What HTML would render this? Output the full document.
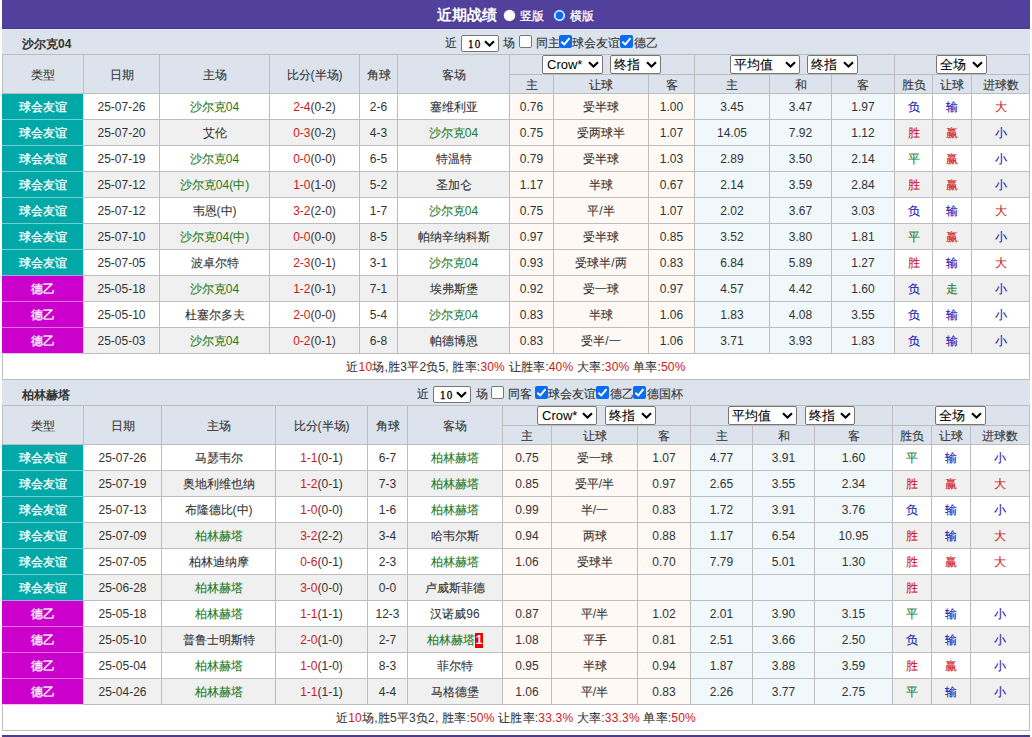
<!DOCTYPE html><html><head><meta charset="utf-8"><style>
html,body{margin:0;padding:0;background:#fff;}
body{width:1032px;height:737px;position:relative;overflow:hidden;font-family:"Liberation Sans",sans-serif;font-size:12px;color:#333;}
body div{position:absolute;box-sizing:content-box;}
.t{text-align:center;white-space:nowrap;overflow:visible;}
.c{-webkit-text-stroke:0.1px currentColor;}
.tw .c{-webkit-text-stroke:0.3px #fff;}
.sel{background:#fff;border:1px solid #767676;border-radius:2px;font-size:13px;color:#000;}
.badge{display:inline-block;background:#e00;color:#fff;font-weight:bold;width:8px;line-height:15px;height:15px;vertical-align:middle;text-align:center;font-size:12px}

</style></head><body>
<div style="left:2px;top:0px;width:1028px;height:28px;background:#52409d;"></div>
<div style="left:2px;top:28px;width:1028px;height:1px;background:#46388a;"></div>
<div style="left:2px;top:29px;width:1028px;height:1px;background:#e6e4f8;"></div>
<div class="t" style="left:437px;top:0px;width:62px;height:29px;line-height:29px;color:#fff;font-weight:bold;font-size:15px;text-align:left">近期战绩</div>
<svg style="position:absolute;left:503px;top:9px" width="13" height="13" viewBox="0 0 13 13"><circle cx="6.5" cy="6.5" r="6.1" fill="#fff" stroke="#3a2d70" stroke-width="0.6"/></svg>
<div class="t tw" style="left:520px;top:2px;width:30px;height:29px;line-height:29px;color:#fff;text-align:left"><span class="c">竖版</span></div>
<svg style="position:absolute;left:553px;top:9px" width="13" height="13" viewBox="0 0 13 13"><circle cx="6.5" cy="6.5" r="6.3" fill="#2a5fe0"/><circle cx="6.5" cy="6.5" r="5.4" fill="#fff"/><circle cx="6.5" cy="6.5" r="3.9" fill="#0a6cff"/></svg>
<div class="t tw" style="left:570px;top:2px;width:30px;height:29px;line-height:29px;color:#fff;text-align:left"><span class="c">横版</span></div>
<div style="left:2px;top:30px;width:1028px;height:24px;background:#dce3ec;"></div>
<div class="t" style="left:22px;top:32px;width:200px;height:24px;line-height:24px;text-align:left;font-weight:bold;">沙尔克04</div>

<div style="left:2px;top:54px;width:1028px;height:40px;background:#dce3ec;"></div>
<div style="left:2px;top:54px;width:1028px;height:1px;background:#bdbdbd;"></div>
<div style="left:2px;top:93px;width:1028px;height:1px;background:#bdbdbd;"></div>
<div style="left:509px;top:74px;width:520px;height:1px;background:#bdbdbd;"></div>
<div class="t" style="left:3px;top:56px;width:80px;height:38px;line-height:38px;"><span class="c">类型</span></div>
<div class="t" style="left:84px;top:56px;width:75px;height:38px;line-height:38px;"><span class="c">日期</span></div>
<div class="t" style="left:160px;top:56px;width:109px;height:38px;line-height:38px;"><span class="c">主场</span></div>
<div class="t" style="left:270px;top:56px;width:89px;height:38px;line-height:38px;"><span class="c">比分</span>(<span class="c">半场</span>)</div>
<div class="t" style="left:360px;top:56px;width:37px;height:38px;line-height:38px;"><span class="c">角球</span></div>
<div class="t" style="left:398px;top:56px;width:111px;height:38px;line-height:38px;"><span class="c">客场</span></div>
<div class="t" style="left:510px;top:76px;width:43px;height:18px;line-height:18px;"><span class="c">主</span></div>
<div class="t" style="left:554px;top:76px;width:94px;height:18px;line-height:18px;"><span class="c">让球</span></div>
<div class="t" style="left:649px;top:76px;width:45px;height:18px;line-height:18px;"><span class="c">客</span></div>
<div class="t" style="left:695px;top:76px;width:74px;height:18px;line-height:18px;"><span class="c">主</span></div>
<div class="t" style="left:770px;top:76px;width:61px;height:18px;line-height:18px;"><span class="c">和</span></div>
<div class="t" style="left:832px;top:76px;width:62px;height:18px;line-height:18px;"><span class="c">客</span></div>
<div class="t" style="left:895px;top:76px;width:37px;height:18px;line-height:18px;"><span class="c">胜负</span></div>
<div class="t" style="left:933px;top:76px;width:38px;height:18px;line-height:18px;"><span class="c">让球</span></div>
<div class="t" style="left:972px;top:76px;width:57px;height:18px;line-height:18px;"><span class="c">进球数</span></div>
<div style="left:84px;top:94px;width:75px;height:25px;background:#fff;"></div>
<div style="left:160px;top:94px;width:109px;height:25px;background:#fff;"></div>
<div style="left:270px;top:94px;width:89px;height:25px;background:#fff;"></div>
<div style="left:360px;top:94px;width:37px;height:25px;background:#fff;"></div>
<div style="left:398px;top:94px;width:111px;height:25px;background:#fff;"></div>
<div style="left:510px;top:94px;width:43px;height:25px;background:#fef9f5;"></div>
<div style="left:554px;top:94px;width:94px;height:25px;background:#fef9f5;"></div>
<div style="left:649px;top:94px;width:45px;height:25px;background:#fef9f5;"></div>
<div style="left:695px;top:94px;width:74px;height:25px;background:#f0f8fb;"></div>
<div style="left:770px;top:94px;width:61px;height:25px;background:#f0f8fb;"></div>
<div style="left:832px;top:94px;width:62px;height:25px;background:#f0f8fb;"></div>
<div style="left:895px;top:94px;width:37px;height:25px;background:#fff;"></div>
<div style="left:933px;top:94px;width:38px;height:25px;background:#fff;"></div>
<div style="left:972px;top:94px;width:57px;height:25px;background:#fff;"></div>
<div class="t" style="left:84px;top:95px;width:75px;height:25px;line-height:25px;">25-07-26</div>
<div class="t" style="left:160px;top:95px;width:109px;height:25px;line-height:25px;"><span style="color:#1f7a1f"><span class="c">沙尔克</span>04</span></div>
<div class="t" style="left:270px;top:95px;width:89px;height:25px;line-height:25px;"><span style="color:#d01818">2-4</span>(0-2)</div>
<div class="t" style="left:360px;top:95px;width:37px;height:25px;line-height:25px;">2-6</div>
<div class="t" style="left:398px;top:95px;width:111px;height:25px;line-height:25px;"><span class="c">塞维利亚</span></div>
<div class="t" style="left:510px;top:95px;width:43px;height:25px;line-height:25px;">0.76</div>
<div class="t" style="left:554px;top:95px;width:94px;height:25px;line-height:25px;"><span class="c">受半球</span></div>
<div class="t" style="left:649px;top:95px;width:45px;height:25px;line-height:25px;">1.00</div>
<div class="t" style="left:695px;top:95px;width:74px;height:25px;line-height:25px;">3.45</div>
<div class="t" style="left:770px;top:95px;width:61px;height:25px;line-height:25px;">3.47</div>
<div class="t" style="left:832px;top:95px;width:62px;height:25px;line-height:25px;">1.97</div>
<div class="t" style="left:895px;top:95px;width:37px;height:25px;line-height:25px;"><span style="color:#1414b4"><span class="c">负</span></span></div>
<div class="t" style="left:933px;top:95px;width:38px;height:25px;line-height:25px;"><span style="color:#1414b4"><span class="c">输</span></span></div>
<div class="t" style="left:972px;top:95px;width:57px;height:25px;line-height:25px;"><span style="color:#d01818"><span class="c">大</span></span></div>
<div style="left:84px;top:120px;width:75px;height:25px;background:#f0f0f0;"></div>
<div style="left:160px;top:120px;width:109px;height:25px;background:#f0f0f0;"></div>
<div style="left:270px;top:120px;width:89px;height:25px;background:#f0f0f0;"></div>
<div style="left:360px;top:120px;width:37px;height:25px;background:#f0f0f0;"></div>
<div style="left:398px;top:120px;width:111px;height:25px;background:#f0f0f0;"></div>
<div style="left:510px;top:120px;width:43px;height:25px;background:#fef9f5;"></div>
<div style="left:554px;top:120px;width:94px;height:25px;background:#fef9f5;"></div>
<div style="left:649px;top:120px;width:45px;height:25px;background:#fef9f5;"></div>
<div style="left:695px;top:120px;width:74px;height:25px;background:#f0f8fb;"></div>
<div style="left:770px;top:120px;width:61px;height:25px;background:#f0f8fb;"></div>
<div style="left:832px;top:120px;width:62px;height:25px;background:#f0f8fb;"></div>
<div style="left:895px;top:120px;width:37px;height:25px;background:#f0f0f0;"></div>
<div style="left:933px;top:120px;width:38px;height:25px;background:#f0f0f0;"></div>
<div style="left:972px;top:120px;width:57px;height:25px;background:#f0f0f0;"></div>
<div class="t" style="left:84px;top:121px;width:75px;height:25px;line-height:25px;">25-07-20</div>
<div class="t" style="left:160px;top:121px;width:109px;height:25px;line-height:25px;"><span class="c">艾伦</span></div>
<div class="t" style="left:270px;top:121px;width:89px;height:25px;line-height:25px;"><span style="color:#d01818">0-3</span>(0-2)</div>
<div class="t" style="left:360px;top:121px;width:37px;height:25px;line-height:25px;">4-3</div>
<div class="t" style="left:398px;top:121px;width:111px;height:25px;line-height:25px;"><span style="color:#1f7a1f"><span class="c">沙尔克</span>04</span></div>
<div class="t" style="left:510px;top:121px;width:43px;height:25px;line-height:25px;">0.75</div>
<div class="t" style="left:554px;top:121px;width:94px;height:25px;line-height:25px;"><span class="c">受两球半</span></div>
<div class="t" style="left:649px;top:121px;width:45px;height:25px;line-height:25px;">1.07</div>
<div class="t" style="left:695px;top:121px;width:74px;height:25px;line-height:25px;">14.05</div>
<div class="t" style="left:770px;top:121px;width:61px;height:25px;line-height:25px;">7.92</div>
<div class="t" style="left:832px;top:121px;width:62px;height:25px;line-height:25px;">1.12</div>
<div class="t" style="left:895px;top:121px;width:37px;height:25px;line-height:25px;"><span style="color:#d01818"><span class="c">胜</span></span></div>
<div class="t" style="left:933px;top:121px;width:38px;height:25px;line-height:25px;"><span style="color:#d01818"><span class="c">赢</span></span></div>
<div class="t" style="left:972px;top:121px;width:57px;height:25px;line-height:25px;"><span style="color:#1414b4"><span class="c">小</span></span></div>
<div style="left:84px;top:146px;width:75px;height:25px;background:#fff;"></div>
<div style="left:160px;top:146px;width:109px;height:25px;background:#fff;"></div>
<div style="left:270px;top:146px;width:89px;height:25px;background:#fff;"></div>
<div style="left:360px;top:146px;width:37px;height:25px;background:#fff;"></div>
<div style="left:398px;top:146px;width:111px;height:25px;background:#fff;"></div>
<div style="left:510px;top:146px;width:43px;height:25px;background:#fef9f5;"></div>
<div style="left:554px;top:146px;width:94px;height:25px;background:#fef9f5;"></div>
<div style="left:649px;top:146px;width:45px;height:25px;background:#fef9f5;"></div>
<div style="left:695px;top:146px;width:74px;height:25px;background:#f0f8fb;"></div>
<div style="left:770px;top:146px;width:61px;height:25px;background:#f0f8fb;"></div>
<div style="left:832px;top:146px;width:62px;height:25px;background:#f0f8fb;"></div>
<div style="left:895px;top:146px;width:37px;height:25px;background:#fff;"></div>
<div style="left:933px;top:146px;width:38px;height:25px;background:#fff;"></div>
<div style="left:972px;top:146px;width:57px;height:25px;background:#fff;"></div>
<div class="t" style="left:84px;top:147px;width:75px;height:25px;line-height:25px;">25-07-19</div>
<div class="t" style="left:160px;top:147px;width:109px;height:25px;line-height:25px;"><span style="color:#1f7a1f"><span class="c">沙尔克</span>04</span></div>
<div class="t" style="left:270px;top:147px;width:89px;height:25px;line-height:25px;"><span style="color:#d01818">0-0</span>(0-0)</div>
<div class="t" style="left:360px;top:147px;width:37px;height:25px;line-height:25px;">6-5</div>
<div class="t" style="left:398px;top:147px;width:111px;height:25px;line-height:25px;"><span class="c">特温特</span></div>
<div class="t" style="left:510px;top:147px;width:43px;height:25px;line-height:25px;">0.79</div>
<div class="t" style="left:554px;top:147px;width:94px;height:25px;line-height:25px;"><span class="c">受半球</span></div>
<div class="t" style="left:649px;top:147px;width:45px;height:25px;line-height:25px;">1.03</div>
<div class="t" style="left:695px;top:147px;width:74px;height:25px;line-height:25px;">2.89</div>
<div class="t" style="left:770px;top:147px;width:61px;height:25px;line-height:25px;">3.50</div>
<div class="t" style="left:832px;top:147px;width:62px;height:25px;line-height:25px;">2.14</div>
<div class="t" style="left:895px;top:147px;width:37px;height:25px;line-height:25px;"><span style="color:#1f7a1f"><span class="c">平</span></span></div>
<div class="t" style="left:933px;top:147px;width:38px;height:25px;line-height:25px;"><span style="color:#d01818"><span class="c">赢</span></span></div>
<div class="t" style="left:972px;top:147px;width:57px;height:25px;line-height:25px;"><span style="color:#1414b4"><span class="c">小</span></span></div>
<div style="left:84px;top:172px;width:75px;height:25px;background:#f0f0f0;"></div>
<div style="left:160px;top:172px;width:109px;height:25px;background:#f0f0f0;"></div>
<div style="left:270px;top:172px;width:89px;height:25px;background:#f0f0f0;"></div>
<div style="left:360px;top:172px;width:37px;height:25px;background:#f0f0f0;"></div>
<div style="left:398px;top:172px;width:111px;height:25px;background:#f0f0f0;"></div>
<div style="left:510px;top:172px;width:43px;height:25px;background:#fef9f5;"></div>
<div style="left:554px;top:172px;width:94px;height:25px;background:#fef9f5;"></div>
<div style="left:649px;top:172px;width:45px;height:25px;background:#fef9f5;"></div>
<div style="left:695px;top:172px;width:74px;height:25px;background:#f0f8fb;"></div>
<div style="left:770px;top:172px;width:61px;height:25px;background:#f0f8fb;"></div>
<div style="left:832px;top:172px;width:62px;height:25px;background:#f0f8fb;"></div>
<div style="left:895px;top:172px;width:37px;height:25px;background:#f0f0f0;"></div>
<div style="left:933px;top:172px;width:38px;height:25px;background:#f0f0f0;"></div>
<div style="left:972px;top:172px;width:57px;height:25px;background:#f0f0f0;"></div>
<div class="t" style="left:84px;top:173px;width:75px;height:25px;line-height:25px;">25-07-12</div>
<div class="t" style="left:160px;top:173px;width:109px;height:25px;line-height:25px;"><span style="color:#1f7a1f"><span class="c">沙尔克</span>04(<span class="c">中</span>)</span></div>
<div class="t" style="left:270px;top:173px;width:89px;height:25px;line-height:25px;"><span style="color:#d01818">1-0</span>(1-0)</div>
<div class="t" style="left:360px;top:173px;width:37px;height:25px;line-height:25px;">5-2</div>
<div class="t" style="left:398px;top:173px;width:111px;height:25px;line-height:25px;"><span class="c">圣加仑</span></div>
<div class="t" style="left:510px;top:173px;width:43px;height:25px;line-height:25px;">1.17</div>
<div class="t" style="left:554px;top:173px;width:94px;height:25px;line-height:25px;"><span class="c">半球</span></div>
<div class="t" style="left:649px;top:173px;width:45px;height:25px;line-height:25px;">0.67</div>
<div class="t" style="left:695px;top:173px;width:74px;height:25px;line-height:25px;">2.14</div>
<div class="t" style="left:770px;top:173px;width:61px;height:25px;line-height:25px;">3.59</div>
<div class="t" style="left:832px;top:173px;width:62px;height:25px;line-height:25px;">2.84</div>
<div class="t" style="left:895px;top:173px;width:37px;height:25px;line-height:25px;"><span style="color:#d01818"><span class="c">胜</span></span></div>
<div class="t" style="left:933px;top:173px;width:38px;height:25px;line-height:25px;"><span style="color:#d01818"><span class="c">赢</span></span></div>
<div class="t" style="left:972px;top:173px;width:57px;height:25px;line-height:25px;"><span style="color:#1414b4"><span class="c">小</span></span></div>
<div style="left:84px;top:198px;width:75px;height:25px;background:#fff;"></div>
<div style="left:160px;top:198px;width:109px;height:25px;background:#fff;"></div>
<div style="left:270px;top:198px;width:89px;height:25px;background:#fff;"></div>
<div style="left:360px;top:198px;width:37px;height:25px;background:#fff;"></div>
<div style="left:398px;top:198px;width:111px;height:25px;background:#fff;"></div>
<div style="left:510px;top:198px;width:43px;height:25px;background:#fef9f5;"></div>
<div style="left:554px;top:198px;width:94px;height:25px;background:#fef9f5;"></div>
<div style="left:649px;top:198px;width:45px;height:25px;background:#fef9f5;"></div>
<div style="left:695px;top:198px;width:74px;height:25px;background:#f0f8fb;"></div>
<div style="left:770px;top:198px;width:61px;height:25px;background:#f0f8fb;"></div>
<div style="left:832px;top:198px;width:62px;height:25px;background:#f0f8fb;"></div>
<div style="left:895px;top:198px;width:37px;height:25px;background:#fff;"></div>
<div style="left:933px;top:198px;width:38px;height:25px;background:#fff;"></div>
<div style="left:972px;top:198px;width:57px;height:25px;background:#fff;"></div>
<div class="t" style="left:84px;top:199px;width:75px;height:25px;line-height:25px;">25-07-12</div>
<div class="t" style="left:160px;top:199px;width:109px;height:25px;line-height:25px;"><span class="c">韦恩</span>(<span class="c">中</span>)</div>
<div class="t" style="left:270px;top:199px;width:89px;height:25px;line-height:25px;"><span style="color:#d01818">3-2</span>(2-0)</div>
<div class="t" style="left:360px;top:199px;width:37px;height:25px;line-height:25px;">1-7</div>
<div class="t" style="left:398px;top:199px;width:111px;height:25px;line-height:25px;"><span style="color:#1f7a1f"><span class="c">沙尔克</span>04</span></div>
<div class="t" style="left:510px;top:199px;width:43px;height:25px;line-height:25px;">0.75</div>
<div class="t" style="left:554px;top:199px;width:94px;height:25px;line-height:25px;"><span class="c">平</span>/<span class="c">半</span></div>
<div class="t" style="left:649px;top:199px;width:45px;height:25px;line-height:25px;">1.07</div>
<div class="t" style="left:695px;top:199px;width:74px;height:25px;line-height:25px;">2.02</div>
<div class="t" style="left:770px;top:199px;width:61px;height:25px;line-height:25px;">3.67</div>
<div class="t" style="left:832px;top:199px;width:62px;height:25px;line-height:25px;">3.03</div>
<div class="t" style="left:895px;top:199px;width:37px;height:25px;line-height:25px;"><span style="color:#1414b4"><span class="c">负</span></span></div>
<div class="t" style="left:933px;top:199px;width:38px;height:25px;line-height:25px;"><span style="color:#1414b4"><span class="c">输</span></span></div>
<div class="t" style="left:972px;top:199px;width:57px;height:25px;line-height:25px;"><span style="color:#d01818"><span class="c">大</span></span></div>
<div style="left:84px;top:224px;width:75px;height:25px;background:#f0f0f0;"></div>
<div style="left:160px;top:224px;width:109px;height:25px;background:#f0f0f0;"></div>
<div style="left:270px;top:224px;width:89px;height:25px;background:#f0f0f0;"></div>
<div style="left:360px;top:224px;width:37px;height:25px;background:#f0f0f0;"></div>
<div style="left:398px;top:224px;width:111px;height:25px;background:#f0f0f0;"></div>
<div style="left:510px;top:224px;width:43px;height:25px;background:#fef9f5;"></div>
<div style="left:554px;top:224px;width:94px;height:25px;background:#fef9f5;"></div>
<div style="left:649px;top:224px;width:45px;height:25px;background:#fef9f5;"></div>
<div style="left:695px;top:224px;width:74px;height:25px;background:#f0f8fb;"></div>
<div style="left:770px;top:224px;width:61px;height:25px;background:#f0f8fb;"></div>
<div style="left:832px;top:224px;width:62px;height:25px;background:#f0f8fb;"></div>
<div style="left:895px;top:224px;width:37px;height:25px;background:#f0f0f0;"></div>
<div style="left:933px;top:224px;width:38px;height:25px;background:#f0f0f0;"></div>
<div style="left:972px;top:224px;width:57px;height:25px;background:#f0f0f0;"></div>
<div class="t" style="left:84px;top:225px;width:75px;height:25px;line-height:25px;">25-07-10</div>
<div class="t" style="left:160px;top:225px;width:109px;height:25px;line-height:25px;"><span style="color:#1f7a1f"><span class="c">沙尔克</span>04(<span class="c">中</span>)</span></div>
<div class="t" style="left:270px;top:225px;width:89px;height:25px;line-height:25px;"><span style="color:#d01818">0-0</span>(0-0)</div>
<div class="t" style="left:360px;top:225px;width:37px;height:25px;line-height:25px;">8-5</div>
<div class="t" style="left:398px;top:225px;width:111px;height:25px;line-height:25px;"><span class="c">帕纳辛纳科斯</span></div>
<div class="t" style="left:510px;top:225px;width:43px;height:25px;line-height:25px;">0.97</div>
<div class="t" style="left:554px;top:225px;width:94px;height:25px;line-height:25px;"><span class="c">受半球</span></div>
<div class="t" style="left:649px;top:225px;width:45px;height:25px;line-height:25px;">0.85</div>
<div class="t" style="left:695px;top:225px;width:74px;height:25px;line-height:25px;">3.52</div>
<div class="t" style="left:770px;top:225px;width:61px;height:25px;line-height:25px;">3.80</div>
<div class="t" style="left:832px;top:225px;width:62px;height:25px;line-height:25px;">1.81</div>
<div class="t" style="left:895px;top:225px;width:37px;height:25px;line-height:25px;"><span style="color:#1f7a1f"><span class="c">平</span></span></div>
<div class="t" style="left:933px;top:225px;width:38px;height:25px;line-height:25px;"><span style="color:#d01818"><span class="c">赢</span></span></div>
<div class="t" style="left:972px;top:225px;width:57px;height:25px;line-height:25px;"><span style="color:#1414b4"><span class="c">小</span></span></div>
<div style="left:84px;top:250px;width:75px;height:25px;background:#fff;"></div>
<div style="left:160px;top:250px;width:109px;height:25px;background:#fff;"></div>
<div style="left:270px;top:250px;width:89px;height:25px;background:#fff;"></div>
<div style="left:360px;top:250px;width:37px;height:25px;background:#fff;"></div>
<div style="left:398px;top:250px;width:111px;height:25px;background:#fff;"></div>
<div style="left:510px;top:250px;width:43px;height:25px;background:#fef9f5;"></div>
<div style="left:554px;top:250px;width:94px;height:25px;background:#fef9f5;"></div>
<div style="left:649px;top:250px;width:45px;height:25px;background:#fef9f5;"></div>
<div style="left:695px;top:250px;width:74px;height:25px;background:#f0f8fb;"></div>
<div style="left:770px;top:250px;width:61px;height:25px;background:#f0f8fb;"></div>
<div style="left:832px;top:250px;width:62px;height:25px;background:#f0f8fb;"></div>
<div style="left:895px;top:250px;width:37px;height:25px;background:#fff;"></div>
<div style="left:933px;top:250px;width:38px;height:25px;background:#fff;"></div>
<div style="left:972px;top:250px;width:57px;height:25px;background:#fff;"></div>
<div class="t" style="left:84px;top:251px;width:75px;height:25px;line-height:25px;">25-07-05</div>
<div class="t" style="left:160px;top:251px;width:109px;height:25px;line-height:25px;"><span class="c">波卓尔特</span></div>
<div class="t" style="left:270px;top:251px;width:89px;height:25px;line-height:25px;"><span style="color:#d01818">2-3</span>(0-1)</div>
<div class="t" style="left:360px;top:251px;width:37px;height:25px;line-height:25px;">3-1</div>
<div class="t" style="left:398px;top:251px;width:111px;height:25px;line-height:25px;"><span style="color:#1f7a1f"><span class="c">沙尔克</span>04</span></div>
<div class="t" style="left:510px;top:251px;width:43px;height:25px;line-height:25px;">0.93</div>
<div class="t" style="left:554px;top:251px;width:94px;height:25px;line-height:25px;"><span class="c">受球半</span>/<span class="c">两</span></div>
<div class="t" style="left:649px;top:251px;width:45px;height:25px;line-height:25px;">0.83</div>
<div class="t" style="left:695px;top:251px;width:74px;height:25px;line-height:25px;">6.84</div>
<div class="t" style="left:770px;top:251px;width:61px;height:25px;line-height:25px;">5.89</div>
<div class="t" style="left:832px;top:251px;width:62px;height:25px;line-height:25px;">1.27</div>
<div class="t" style="left:895px;top:251px;width:37px;height:25px;line-height:25px;"><span style="color:#d01818"><span class="c">胜</span></span></div>
<div class="t" style="left:933px;top:251px;width:38px;height:25px;line-height:25px;"><span style="color:#1414b4"><span class="c">输</span></span></div>
<div class="t" style="left:972px;top:251px;width:57px;height:25px;line-height:25px;"><span style="color:#d01818"><span class="c">大</span></span></div>
<div style="left:84px;top:276px;width:75px;height:25px;background:#f0f0f0;"></div>
<div style="left:160px;top:276px;width:109px;height:25px;background:#f0f0f0;"></div>
<div style="left:270px;top:276px;width:89px;height:25px;background:#f0f0f0;"></div>
<div style="left:360px;top:276px;width:37px;height:25px;background:#f0f0f0;"></div>
<div style="left:398px;top:276px;width:111px;height:25px;background:#f0f0f0;"></div>
<div style="left:510px;top:276px;width:43px;height:25px;background:#fef9f5;"></div>
<div style="left:554px;top:276px;width:94px;height:25px;background:#fef9f5;"></div>
<div style="left:649px;top:276px;width:45px;height:25px;background:#fef9f5;"></div>
<div style="left:695px;top:276px;width:74px;height:25px;background:#f0f8fb;"></div>
<div style="left:770px;top:276px;width:61px;height:25px;background:#f0f8fb;"></div>
<div style="left:832px;top:276px;width:62px;height:25px;background:#f0f8fb;"></div>
<div style="left:895px;top:276px;width:37px;height:25px;background:#f0f0f0;"></div>
<div style="left:933px;top:276px;width:38px;height:25px;background:#f0f0f0;"></div>
<div style="left:972px;top:276px;width:57px;height:25px;background:#f0f0f0;"></div>
<div class="t" style="left:84px;top:277px;width:75px;height:25px;line-height:25px;">25-05-18</div>
<div class="t" style="left:160px;top:277px;width:109px;height:25px;line-height:25px;"><span style="color:#1f7a1f"><span class="c">沙尔克</span>04</span></div>
<div class="t" style="left:270px;top:277px;width:89px;height:25px;line-height:25px;"><span style="color:#d01818">1-2</span>(0-1)</div>
<div class="t" style="left:360px;top:277px;width:37px;height:25px;line-height:25px;">7-1</div>
<div class="t" style="left:398px;top:277px;width:111px;height:25px;line-height:25px;"><span class="c">埃弗斯堡</span></div>
<div class="t" style="left:510px;top:277px;width:43px;height:25px;line-height:25px;">0.92</div>
<div class="t" style="left:554px;top:277px;width:94px;height:25px;line-height:25px;"><span class="c">受一球</span></div>
<div class="t" style="left:649px;top:277px;width:45px;height:25px;line-height:25px;">0.97</div>
<div class="t" style="left:695px;top:277px;width:74px;height:25px;line-height:25px;">4.57</div>
<div class="t" style="left:770px;top:277px;width:61px;height:25px;line-height:25px;">4.42</div>
<div class="t" style="left:832px;top:277px;width:62px;height:25px;line-height:25px;">1.60</div>
<div class="t" style="left:895px;top:277px;width:37px;height:25px;line-height:25px;"><span style="color:#1414b4"><span class="c">负</span></span></div>
<div class="t" style="left:933px;top:277px;width:38px;height:25px;line-height:25px;"><span style="color:#1f7a1f"><span class="c">走</span></span></div>
<div class="t" style="left:972px;top:277px;width:57px;height:25px;line-height:25px;"><span style="color:#1414b4"><span class="c">小</span></span></div>
<div style="left:84px;top:302px;width:75px;height:25px;background:#fff;"></div>
<div style="left:160px;top:302px;width:109px;height:25px;background:#fff;"></div>
<div style="left:270px;top:302px;width:89px;height:25px;background:#fff;"></div>
<div style="left:360px;top:302px;width:37px;height:25px;background:#fff;"></div>
<div style="left:398px;top:302px;width:111px;height:25px;background:#fff;"></div>
<div style="left:510px;top:302px;width:43px;height:25px;background:#fef9f5;"></div>
<div style="left:554px;top:302px;width:94px;height:25px;background:#fef9f5;"></div>
<div style="left:649px;top:302px;width:45px;height:25px;background:#fef9f5;"></div>
<div style="left:695px;top:302px;width:74px;height:25px;background:#f0f8fb;"></div>
<div style="left:770px;top:302px;width:61px;height:25px;background:#f0f8fb;"></div>
<div style="left:832px;top:302px;width:62px;height:25px;background:#f0f8fb;"></div>
<div style="left:895px;top:302px;width:37px;height:25px;background:#fff;"></div>
<div style="left:933px;top:302px;width:38px;height:25px;background:#fff;"></div>
<div style="left:972px;top:302px;width:57px;height:25px;background:#fff;"></div>
<div class="t" style="left:84px;top:303px;width:75px;height:25px;line-height:25px;">25-05-10</div>
<div class="t" style="left:160px;top:303px;width:109px;height:25px;line-height:25px;"><span class="c">杜塞尔多夫</span></div>
<div class="t" style="left:270px;top:303px;width:89px;height:25px;line-height:25px;"><span style="color:#d01818">2-0</span>(0-0)</div>
<div class="t" style="left:360px;top:303px;width:37px;height:25px;line-height:25px;">5-4</div>
<div class="t" style="left:398px;top:303px;width:111px;height:25px;line-height:25px;"><span style="color:#1f7a1f"><span class="c">沙尔克</span>04</span></div>
<div class="t" style="left:510px;top:303px;width:43px;height:25px;line-height:25px;">0.83</div>
<div class="t" style="left:554px;top:303px;width:94px;height:25px;line-height:25px;"><span class="c">半球</span></div>
<div class="t" style="left:649px;top:303px;width:45px;height:25px;line-height:25px;">1.06</div>
<div class="t" style="left:695px;top:303px;width:74px;height:25px;line-height:25px;">1.83</div>
<div class="t" style="left:770px;top:303px;width:61px;height:25px;line-height:25px;">4.08</div>
<div class="t" style="left:832px;top:303px;width:62px;height:25px;line-height:25px;">3.55</div>
<div class="t" style="left:895px;top:303px;width:37px;height:25px;line-height:25px;"><span style="color:#1414b4"><span class="c">负</span></span></div>
<div class="t" style="left:933px;top:303px;width:38px;height:25px;line-height:25px;"><span style="color:#1414b4"><span class="c">输</span></span></div>
<div class="t" style="left:972px;top:303px;width:57px;height:25px;line-height:25px;"><span style="color:#1414b4"><span class="c">小</span></span></div>
<div style="left:84px;top:328px;width:75px;height:25px;background:#f0f0f0;"></div>
<div style="left:160px;top:328px;width:109px;height:25px;background:#f0f0f0;"></div>
<div style="left:270px;top:328px;width:89px;height:25px;background:#f0f0f0;"></div>
<div style="left:360px;top:328px;width:37px;height:25px;background:#f0f0f0;"></div>
<div style="left:398px;top:328px;width:111px;height:25px;background:#f0f0f0;"></div>
<div style="left:510px;top:328px;width:43px;height:25px;background:#fef9f5;"></div>
<div style="left:554px;top:328px;width:94px;height:25px;background:#fef9f5;"></div>
<div style="left:649px;top:328px;width:45px;height:25px;background:#fef9f5;"></div>
<div style="left:695px;top:328px;width:74px;height:25px;background:#f0f8fb;"></div>
<div style="left:770px;top:328px;width:61px;height:25px;background:#f0f8fb;"></div>
<div style="left:832px;top:328px;width:62px;height:25px;background:#f0f8fb;"></div>
<div style="left:895px;top:328px;width:37px;height:25px;background:#f0f0f0;"></div>
<div style="left:933px;top:328px;width:38px;height:25px;background:#f0f0f0;"></div>
<div style="left:972px;top:328px;width:57px;height:25px;background:#f0f0f0;"></div>
<div class="t" style="left:84px;top:329px;width:75px;height:25px;line-height:25px;">25-05-03</div>
<div class="t" style="left:160px;top:329px;width:109px;height:25px;line-height:25px;"><span style="color:#1f7a1f"><span class="c">沙尔克</span>04</span></div>
<div class="t" style="left:270px;top:329px;width:89px;height:25px;line-height:25px;"><span style="color:#d01818">0-2</span>(0-1)</div>
<div class="t" style="left:360px;top:329px;width:37px;height:25px;line-height:25px;">6-8</div>
<div class="t" style="left:398px;top:329px;width:111px;height:25px;line-height:25px;"><span class="c">帕德博恩</span></div>
<div class="t" style="left:510px;top:329px;width:43px;height:25px;line-height:25px;">0.83</div>
<div class="t" style="left:554px;top:329px;width:94px;height:25px;line-height:25px;"><span class="c">受半</span>/<span class="c">一</span></div>
<div class="t" style="left:649px;top:329px;width:45px;height:25px;line-height:25px;">1.06</div>
<div class="t" style="left:695px;top:329px;width:74px;height:25px;line-height:25px;">3.71</div>
<div class="t" style="left:770px;top:329px;width:61px;height:25px;line-height:25px;">3.93</div>
<div class="t" style="left:832px;top:329px;width:62px;height:25px;line-height:25px;">1.83</div>
<div class="t" style="left:895px;top:329px;width:37px;height:25px;line-height:25px;"><span style="color:#1414b4"><span class="c">负</span></span></div>
<div class="t" style="left:933px;top:329px;width:38px;height:25px;line-height:25px;"><span style="color:#1414b4"><span class="c">输</span></span></div>
<div class="t" style="left:972px;top:329px;width:57px;height:25px;line-height:25px;"><span style="color:#1414b4"><span class="c">小</span></span></div>
<div style="left:2px;top:54px;width:1px;height:300px;background:#bdbdbd;"></div>
<div style="left:83px;top:54px;width:1px;height:300px;background:#bdbdbd;"></div>
<div style="left:159px;top:54px;width:1px;height:300px;background:#bdbdbd;"></div>
<div style="left:269px;top:54px;width:1px;height:300px;background:#bdbdbd;"></div>
<div style="left:359px;top:54px;width:1px;height:300px;background:#bdbdbd;"></div>
<div style="left:397px;top:54px;width:1px;height:300px;background:#bdbdbd;"></div>
<div style="left:509px;top:54px;width:1px;height:300px;background:#bdbdbd;"></div>
<div style="left:553px;top:74px;width:1px;height:280px;background:#bdbdbd;"></div>
<div style="left:648px;top:74px;width:1px;height:280px;background:#bdbdbd;"></div>
<div style="left:694px;top:54px;width:1px;height:300px;background:#bdbdbd;"></div>
<div style="left:769px;top:74px;width:1px;height:280px;background:#bdbdbd;"></div>
<div style="left:831px;top:74px;width:1px;height:280px;background:#bdbdbd;"></div>
<div style="left:894px;top:54px;width:1px;height:300px;background:#bdbdbd;"></div>
<div style="left:932px;top:74px;width:1px;height:280px;background:#bdbdbd;"></div>
<div style="left:971px;top:74px;width:1px;height:280px;background:#bdbdbd;"></div>
<div style="left:1029px;top:54px;width:1px;height:300px;background:#bdbdbd;"></div>
<div style="left:83px;top:119px;width:947px;height:1px;background:#bdbdbd;"></div>
<div style="left:83px;top:145px;width:947px;height:1px;background:#bdbdbd;"></div>
<div style="left:83px;top:171px;width:947px;height:1px;background:#bdbdbd;"></div>
<div style="left:83px;top:197px;width:947px;height:1px;background:#bdbdbd;"></div>
<div style="left:83px;top:223px;width:947px;height:1px;background:#bdbdbd;"></div>
<div style="left:83px;top:249px;width:947px;height:1px;background:#bdbdbd;"></div>
<div style="left:83px;top:275px;width:947px;height:1px;background:#bdbdbd;"></div>
<div style="left:83px;top:301px;width:947px;height:1px;background:#bdbdbd;"></div>
<div style="left:83px;top:327px;width:947px;height:1px;background:#bdbdbd;"></div>
<div style="left:83px;top:353px;width:947px;height:1px;background:#bdbdbd;"></div>
<div style="left:2px;top:94px;width:81px;height:25px;background:#01a8a8;"></div>
<div style="left:83px;top:94px;width:1px;height:25px;background:#c5ebeb;"></div>
<div class="t tw" style="left:2px;top:95px;width:81px;height:25px;line-height:25px;color:#fff"><span class="c">球会友谊</span></div>
<div style="left:2px;top:120px;width:81px;height:25px;background:#01a8a8;"></div>
<div style="left:2px;top:119px;width:81px;height:1px;background:#73cfcf;"></div>
<div style="left:83px;top:120px;width:1px;height:25px;background:#c5ebeb;"></div>
<div class="t tw" style="left:2px;top:121px;width:81px;height:25px;line-height:25px;color:#fff"><span class="c">球会友谊</span></div>
<div style="left:2px;top:146px;width:81px;height:25px;background:#01a8a8;"></div>
<div style="left:2px;top:145px;width:81px;height:1px;background:#73cfcf;"></div>
<div style="left:83px;top:146px;width:1px;height:25px;background:#c5ebeb;"></div>
<div class="t tw" style="left:2px;top:147px;width:81px;height:25px;line-height:25px;color:#fff"><span class="c">球会友谊</span></div>
<div style="left:2px;top:172px;width:81px;height:25px;background:#01a8a8;"></div>
<div style="left:2px;top:171px;width:81px;height:1px;background:#73cfcf;"></div>
<div style="left:83px;top:172px;width:1px;height:25px;background:#c5ebeb;"></div>
<div class="t tw" style="left:2px;top:173px;width:81px;height:25px;line-height:25px;color:#fff"><span class="c">球会友谊</span></div>
<div style="left:2px;top:198px;width:81px;height:25px;background:#01a8a8;"></div>
<div style="left:2px;top:197px;width:81px;height:1px;background:#73cfcf;"></div>
<div style="left:83px;top:198px;width:1px;height:25px;background:#c5ebeb;"></div>
<div class="t tw" style="left:2px;top:199px;width:81px;height:25px;line-height:25px;color:#fff"><span class="c">球会友谊</span></div>
<div style="left:2px;top:224px;width:81px;height:25px;background:#01a8a8;"></div>
<div style="left:2px;top:223px;width:81px;height:1px;background:#73cfcf;"></div>
<div style="left:83px;top:224px;width:1px;height:25px;background:#c5ebeb;"></div>
<div class="t tw" style="left:2px;top:225px;width:81px;height:25px;line-height:25px;color:#fff"><span class="c">球会友谊</span></div>
<div style="left:2px;top:250px;width:81px;height:25px;background:#01a8a8;"></div>
<div style="left:2px;top:249px;width:81px;height:1px;background:#73cfcf;"></div>
<div style="left:83px;top:250px;width:1px;height:25px;background:#c5ebeb;"></div>
<div class="t tw" style="left:2px;top:251px;width:81px;height:25px;line-height:25px;color:#fff"><span class="c">球会友谊</span></div>
<div style="left:2px;top:276px;width:81px;height:25px;background:#cc00cc;"></div>
<div style="left:2px;top:275px;width:81px;height:1px;background:#aba0d9;"></div>
<div style="left:83px;top:276px;width:1px;height:25px;background:#f3c5f3;"></div>
<div class="t tw" style="left:2px;top:277px;width:81px;height:25px;line-height:25px;color:#fff"><span class="c">德乙</span></div>
<div style="left:2px;top:302px;width:81px;height:25px;background:#cc00cc;"></div>
<div style="left:2px;top:301px;width:81px;height:1px;background:#e272e2;"></div>
<div style="left:83px;top:302px;width:1px;height:25px;background:#f3c5f3;"></div>
<div class="t tw" style="left:2px;top:303px;width:81px;height:25px;line-height:25px;color:#fff"><span class="c">德乙</span></div>
<div style="left:2px;top:328px;width:81px;height:25px;background:#cc00cc;"></div>
<div style="left:2px;top:327px;width:81px;height:1px;background:#e272e2;"></div>
<div style="left:83px;top:328px;width:1px;height:25px;background:#f3c5f3;"></div>
<div class="t tw" style="left:2px;top:329px;width:81px;height:25px;line-height:25px;color:#fff"><span class="c">德乙</span></div>
<div style="left:2px;top:353px;width:81px;height:1px;background:#f2bff2;"></div>
<div style="left:2px;top:354px;width:1028px;height:25px;background:#fff;"></div>
<div style="left:2px;top:354px;width:1px;height:26px;background:#bdbdbd;"></div>
<div style="left:1029px;top:354px;width:1px;height:26px;background:#bdbdbd;"></div>
<div style="left:2px;top:379px;width:1028px;height:1px;background:#bdbdbd;"></div>
<div class="t" style="left:2px;top:355px;width:1028px;height:25px;line-height:25px;letter-spacing:0.2px"><span class="c">近</span><span style="color:#d01818">10</span><span class="c">场</span>,<span class="c">胜</span>3<span class="c">平</span>2<span class="c">负</span>5, <span class="c">胜率</span>:<span style="color:#d01818">30%</span> <span class="c">让胜率</span>:<span style="color:#d01818">40%</span> <span class="c">大率</span>:<span style="color:#d01818">30%</span> <span class="c">单率</span>:<span style="color:#d01818">50%</span></div>
<div class="t" style="left:445px;top:35px;width:14px;height:17px;line-height:17px;text-align:left"><span class="c">近</span></div>
<div class="sel" style="left:461px;top:35px;width:36px;height:15px;"><span style="position:absolute;left:6px;top:0;line-height:15px"><span style="font-family:Liberation Serif,serif;font-size:13.5px;letter-spacing:1.5px;-webkit-text-stroke:0.3px #000;display:inline-block;transform:scaleX(0.82);transform-origin:0 50%">10</span></span></div>
<svg style="position:absolute;left:484px;top:40px" width="11" height="7" viewBox="0 0 11 7"><path d="M1 1.2 L5.5 5.5 L10 1.2" fill="none" stroke="#000" stroke-width="2.1"/></svg>
<div class="t" style="left:503px;top:35px;width:14px;height:17px;line-height:17px;text-align:left"><span class="c">场</span></div>
<div style="left:519px;top:35px;width:11px;height:11px;background:#fff;border:1px solid #767676;border-radius:2px"></div>
<div class="t" style="left:536px;top:35px;width:30px;height:17px;line-height:17px;text-align:left"><span class="c">同主</span></div>
<div style="left:559px;top:35px;width:13px;height:13px;background:#0a6cf5;border-radius:2px"><svg style="position:absolute;left:0;top:0" width="13" height="13" viewBox="0 0 13 13"><path d="M2.3 6.8 L5.3 9.4 L10.5 3.2" fill="none" stroke="#fff" stroke-width="2"/></svg></div>
<div class="t" style="left:572px;top:35px;width:50px;height:17px;line-height:17px;text-align:left"><span class="c">球会友谊</span></div>
<div style="left:620px;top:35px;width:13px;height:13px;background:#0a6cf5;border-radius:2px"><svg style="position:absolute;left:0;top:0" width="13" height="13" viewBox="0 0 13 13"><path d="M2.3 6.8 L5.3 9.4 L10.5 3.2" fill="none" stroke="#fff" stroke-width="2"/></svg></div>
<div class="t" style="left:634px;top:35px;width:30px;height:17px;line-height:17px;text-align:left"><span class="c">德乙</span></div>
<div class="sel" style="left:542px;top:55px;width:59px;height:17px;"><span style="position:absolute;left:4px;top:0;line-height:17px">Crow*</span></div>
<svg style="position:absolute;left:588px;top:61px" width="11" height="7" viewBox="0 0 11 7"><path d="M1 1.2 L5.5 5.5 L10 1.2" fill="none" stroke="#000" stroke-width="2.1"/></svg>
<div class="sel" style="left:610px;top:55px;width:49px;height:17px;"><span style="position:absolute;left:3px;top:0;line-height:17px"><span class="c">终指</span></span></div>
<svg style="position:absolute;left:646px;top:61px" width="11" height="7" viewBox="0 0 11 7"><path d="M1 1.2 L5.5 5.5 L10 1.2" fill="none" stroke="#000" stroke-width="2.1"/></svg>
<div class="sel" style="left:730px;top:55px;width:68px;height:17px;"><span style="position:absolute;left:3px;top:0;line-height:17px"><span class="c">平均值</span></span></div>
<svg style="position:absolute;left:785px;top:61px" width="11" height="7" viewBox="0 0 11 7"><path d="M1 1.2 L5.5 5.5 L10 1.2" fill="none" stroke="#000" stroke-width="2.1"/></svg>
<div class="sel" style="left:807px;top:55px;width:49px;height:17px;"><span style="position:absolute;left:3px;top:0;line-height:17px"><span class="c">终指</span></span></div>
<svg style="position:absolute;left:843px;top:61px" width="11" height="7" viewBox="0 0 11 7"><path d="M1 1.2 L5.5 5.5 L10 1.2" fill="none" stroke="#000" stroke-width="2.1"/></svg>
<div class="sel" style="left:936px;top:55px;width:49px;height:17px;"><span style="position:absolute;left:3px;top:0;line-height:17px"><span class="c">全场</span></span></div>
<svg style="position:absolute;left:972px;top:61px" width="11" height="7" viewBox="0 0 11 7"><path d="M1 1.2 L5.5 5.5 L10 1.2" fill="none" stroke="#000" stroke-width="2.1"/></svg>
<div style="left:2px;top:380px;width:1028px;height:25px;background:#dce3ec;"></div>
<div class="t" style="left:22px;top:383px;width:200px;height:25px;line-height:25px;text-align:left;font-weight:bold;">柏林赫塔</div>

<div style="left:2px;top:405px;width:1028px;height:40px;background:#dce3ec;"></div>
<div style="left:2px;top:405px;width:1028px;height:1px;background:#bdbdbd;"></div>
<div style="left:2px;top:444px;width:1028px;height:1px;background:#bdbdbd;"></div>
<div style="left:502px;top:425px;width:527px;height:1px;background:#bdbdbd;"></div>
<div class="t" style="left:3px;top:407px;width:80px;height:38px;line-height:38px;"><span class="c">类型</span></div>
<div class="t" style="left:84px;top:407px;width:77px;height:38px;line-height:38px;"><span class="c">日期</span></div>
<div class="t" style="left:162px;top:407px;width:113px;height:38px;line-height:38px;"><span class="c">主场</span></div>
<div class="t" style="left:276px;top:407px;width:91px;height:38px;line-height:38px;"><span class="c">比分</span>(<span class="c">半场</span>)</div>
<div class="t" style="left:368px;top:407px;width:39px;height:38px;line-height:38px;"><span class="c">角球</span></div>
<div class="t" style="left:408px;top:407px;width:94px;height:38px;line-height:38px;"><span class="c">客场</span></div>
<div class="t" style="left:503px;top:427px;width:48px;height:18px;line-height:18px;"><span class="c">主</span></div>
<div class="t" style="left:552px;top:427px;width:85px;height:18px;line-height:18px;"><span class="c">让球</span></div>
<div class="t" style="left:638px;top:427px;width:52px;height:18px;line-height:18px;"><span class="c">客</span></div>
<div class="t" style="left:691px;top:427px;width:61px;height:18px;line-height:18px;"><span class="c">主</span></div>
<div class="t" style="left:753px;top:427px;width:61px;height:18px;line-height:18px;"><span class="c">和</span></div>
<div class="t" style="left:815px;top:427px;width:77px;height:18px;line-height:18px;"><span class="c">客</span></div>
<div class="t" style="left:893px;top:427px;width:38px;height:18px;line-height:18px;"><span class="c">胜负</span></div>
<div class="t" style="left:932px;top:427px;width:38px;height:18px;line-height:18px;"><span class="c">让球</span></div>
<div class="t" style="left:971px;top:427px;width:58px;height:18px;line-height:18px;"><span class="c">进球数</span></div>
<div style="left:84px;top:445px;width:77px;height:25px;background:#fff;"></div>
<div style="left:162px;top:445px;width:113px;height:25px;background:#fff;"></div>
<div style="left:276px;top:445px;width:91px;height:25px;background:#fff;"></div>
<div style="left:368px;top:445px;width:39px;height:25px;background:#fff;"></div>
<div style="left:408px;top:445px;width:94px;height:25px;background:#fff;"></div>
<div style="left:503px;top:445px;width:48px;height:25px;background:#fef9f5;"></div>
<div style="left:552px;top:445px;width:85px;height:25px;background:#fef9f5;"></div>
<div style="left:638px;top:445px;width:52px;height:25px;background:#fef9f5;"></div>
<div style="left:691px;top:445px;width:61px;height:25px;background:#f0f8fb;"></div>
<div style="left:753px;top:445px;width:61px;height:25px;background:#f0f8fb;"></div>
<div style="left:815px;top:445px;width:77px;height:25px;background:#f0f8fb;"></div>
<div style="left:893px;top:445px;width:38px;height:25px;background:#fff;"></div>
<div style="left:932px;top:445px;width:38px;height:25px;background:#fff;"></div>
<div style="left:971px;top:445px;width:58px;height:25px;background:#fff;"></div>
<div class="t" style="left:84px;top:446px;width:77px;height:25px;line-height:25px;">25-07-26</div>
<div class="t" style="left:162px;top:446px;width:113px;height:25px;line-height:25px;"><span class="c">马瑟韦尔</span></div>
<div class="t" style="left:276px;top:446px;width:91px;height:25px;line-height:25px;"><span style="color:#d01818">1-1</span>(0-1)</div>
<div class="t" style="left:368px;top:446px;width:39px;height:25px;line-height:25px;">6-7</div>
<div class="t" style="left:408px;top:446px;width:94px;height:25px;line-height:25px;"><span style="color:#1f7a1f"><span class="c">柏林赫塔</span></span></div>
<div class="t" style="left:503px;top:446px;width:48px;height:25px;line-height:25px;">0.75</div>
<div class="t" style="left:552px;top:446px;width:85px;height:25px;line-height:25px;"><span class="c">受一球</span></div>
<div class="t" style="left:638px;top:446px;width:52px;height:25px;line-height:25px;">1.07</div>
<div class="t" style="left:691px;top:446px;width:61px;height:25px;line-height:25px;">4.77</div>
<div class="t" style="left:753px;top:446px;width:61px;height:25px;line-height:25px;">3.91</div>
<div class="t" style="left:815px;top:446px;width:77px;height:25px;line-height:25px;">1.60</div>
<div class="t" style="left:893px;top:446px;width:38px;height:25px;line-height:25px;"><span style="color:#1f7a1f"><span class="c">平</span></span></div>
<div class="t" style="left:932px;top:446px;width:38px;height:25px;line-height:25px;"><span style="color:#1414b4"><span class="c">输</span></span></div>
<div class="t" style="left:971px;top:446px;width:58px;height:25px;line-height:25px;"><span style="color:#1414b4"><span class="c">小</span></span></div>
<div style="left:84px;top:471px;width:77px;height:25px;background:#f0f0f0;"></div>
<div style="left:162px;top:471px;width:113px;height:25px;background:#f0f0f0;"></div>
<div style="left:276px;top:471px;width:91px;height:25px;background:#f0f0f0;"></div>
<div style="left:368px;top:471px;width:39px;height:25px;background:#f0f0f0;"></div>
<div style="left:408px;top:471px;width:94px;height:25px;background:#f0f0f0;"></div>
<div style="left:503px;top:471px;width:48px;height:25px;background:#fef9f5;"></div>
<div style="left:552px;top:471px;width:85px;height:25px;background:#fef9f5;"></div>
<div style="left:638px;top:471px;width:52px;height:25px;background:#fef9f5;"></div>
<div style="left:691px;top:471px;width:61px;height:25px;background:#f0f8fb;"></div>
<div style="left:753px;top:471px;width:61px;height:25px;background:#f0f8fb;"></div>
<div style="left:815px;top:471px;width:77px;height:25px;background:#f0f8fb;"></div>
<div style="left:893px;top:471px;width:38px;height:25px;background:#f0f0f0;"></div>
<div style="left:932px;top:471px;width:38px;height:25px;background:#f0f0f0;"></div>
<div style="left:971px;top:471px;width:58px;height:25px;background:#f0f0f0;"></div>
<div class="t" style="left:84px;top:472px;width:77px;height:25px;line-height:25px;">25-07-19</div>
<div class="t" style="left:162px;top:472px;width:113px;height:25px;line-height:25px;"><span class="c">奥地利维也纳</span></div>
<div class="t" style="left:276px;top:472px;width:91px;height:25px;line-height:25px;"><span style="color:#d01818">1-2</span>(0-1)</div>
<div class="t" style="left:368px;top:472px;width:39px;height:25px;line-height:25px;">7-3</div>
<div class="t" style="left:408px;top:472px;width:94px;height:25px;line-height:25px;"><span style="color:#1f7a1f"><span class="c">柏林赫塔</span></span></div>
<div class="t" style="left:503px;top:472px;width:48px;height:25px;line-height:25px;">0.85</div>
<div class="t" style="left:552px;top:472px;width:85px;height:25px;line-height:25px;"><span class="c">受平</span>/<span class="c">半</span></div>
<div class="t" style="left:638px;top:472px;width:52px;height:25px;line-height:25px;">0.97</div>
<div class="t" style="left:691px;top:472px;width:61px;height:25px;line-height:25px;">2.65</div>
<div class="t" style="left:753px;top:472px;width:61px;height:25px;line-height:25px;">3.55</div>
<div class="t" style="left:815px;top:472px;width:77px;height:25px;line-height:25px;">2.34</div>
<div class="t" style="left:893px;top:472px;width:38px;height:25px;line-height:25px;"><span style="color:#d01818"><span class="c">胜</span></span></div>
<div class="t" style="left:932px;top:472px;width:38px;height:25px;line-height:25px;"><span style="color:#d01818"><span class="c">赢</span></span></div>
<div class="t" style="left:971px;top:472px;width:58px;height:25px;line-height:25px;"><span style="color:#d01818"><span class="c">大</span></span></div>
<div style="left:84px;top:497px;width:77px;height:25px;background:#fff;"></div>
<div style="left:162px;top:497px;width:113px;height:25px;background:#fff;"></div>
<div style="left:276px;top:497px;width:91px;height:25px;background:#fff;"></div>
<div style="left:368px;top:497px;width:39px;height:25px;background:#fff;"></div>
<div style="left:408px;top:497px;width:94px;height:25px;background:#fff;"></div>
<div style="left:503px;top:497px;width:48px;height:25px;background:#fef9f5;"></div>
<div style="left:552px;top:497px;width:85px;height:25px;background:#fef9f5;"></div>
<div style="left:638px;top:497px;width:52px;height:25px;background:#fef9f5;"></div>
<div style="left:691px;top:497px;width:61px;height:25px;background:#f0f8fb;"></div>
<div style="left:753px;top:497px;width:61px;height:25px;background:#f0f8fb;"></div>
<div style="left:815px;top:497px;width:77px;height:25px;background:#f0f8fb;"></div>
<div style="left:893px;top:497px;width:38px;height:25px;background:#fff;"></div>
<div style="left:932px;top:497px;width:38px;height:25px;background:#fff;"></div>
<div style="left:971px;top:497px;width:58px;height:25px;background:#fff;"></div>
<div class="t" style="left:84px;top:498px;width:77px;height:25px;line-height:25px;">25-07-13</div>
<div class="t" style="left:162px;top:498px;width:113px;height:25px;line-height:25px;"><span class="c">布隆德比</span>(<span class="c">中</span>)</div>
<div class="t" style="left:276px;top:498px;width:91px;height:25px;line-height:25px;"><span style="color:#d01818">1-0</span>(0-0)</div>
<div class="t" style="left:368px;top:498px;width:39px;height:25px;line-height:25px;">1-6</div>
<div class="t" style="left:408px;top:498px;width:94px;height:25px;line-height:25px;"><span style="color:#1f7a1f"><span class="c">柏林赫塔</span></span></div>
<div class="t" style="left:503px;top:498px;width:48px;height:25px;line-height:25px;">0.99</div>
<div class="t" style="left:552px;top:498px;width:85px;height:25px;line-height:25px;"><span class="c">半</span>/<span class="c">一</span></div>
<div class="t" style="left:638px;top:498px;width:52px;height:25px;line-height:25px;">0.83</div>
<div class="t" style="left:691px;top:498px;width:61px;height:25px;line-height:25px;">1.72</div>
<div class="t" style="left:753px;top:498px;width:61px;height:25px;line-height:25px;">3.91</div>
<div class="t" style="left:815px;top:498px;width:77px;height:25px;line-height:25px;">3.76</div>
<div class="t" style="left:893px;top:498px;width:38px;height:25px;line-height:25px;"><span style="color:#1414b4"><span class="c">负</span></span></div>
<div class="t" style="left:932px;top:498px;width:38px;height:25px;line-height:25px;"><span style="color:#1414b4"><span class="c">输</span></span></div>
<div class="t" style="left:971px;top:498px;width:58px;height:25px;line-height:25px;"><span style="color:#1414b4"><span class="c">小</span></span></div>
<div style="left:84px;top:523px;width:77px;height:25px;background:#f0f0f0;"></div>
<div style="left:162px;top:523px;width:113px;height:25px;background:#f0f0f0;"></div>
<div style="left:276px;top:523px;width:91px;height:25px;background:#f0f0f0;"></div>
<div style="left:368px;top:523px;width:39px;height:25px;background:#f0f0f0;"></div>
<div style="left:408px;top:523px;width:94px;height:25px;background:#f0f0f0;"></div>
<div style="left:503px;top:523px;width:48px;height:25px;background:#fef9f5;"></div>
<div style="left:552px;top:523px;width:85px;height:25px;background:#fef9f5;"></div>
<div style="left:638px;top:523px;width:52px;height:25px;background:#fef9f5;"></div>
<div style="left:691px;top:523px;width:61px;height:25px;background:#f0f8fb;"></div>
<div style="left:753px;top:523px;width:61px;height:25px;background:#f0f8fb;"></div>
<div style="left:815px;top:523px;width:77px;height:25px;background:#f0f8fb;"></div>
<div style="left:893px;top:523px;width:38px;height:25px;background:#f0f0f0;"></div>
<div style="left:932px;top:523px;width:38px;height:25px;background:#f0f0f0;"></div>
<div style="left:971px;top:523px;width:58px;height:25px;background:#f0f0f0;"></div>
<div class="t" style="left:84px;top:524px;width:77px;height:25px;line-height:25px;">25-07-09</div>
<div class="t" style="left:162px;top:524px;width:113px;height:25px;line-height:25px;"><span style="color:#1f7a1f"><span class="c">柏林赫塔</span></span></div>
<div class="t" style="left:276px;top:524px;width:91px;height:25px;line-height:25px;"><span style="color:#d01818">3-2</span>(2-2)</div>
<div class="t" style="left:368px;top:524px;width:39px;height:25px;line-height:25px;">3-4</div>
<div class="t" style="left:408px;top:524px;width:94px;height:25px;line-height:25px;"><span class="c">哈韦尔斯</span></div>
<div class="t" style="left:503px;top:524px;width:48px;height:25px;line-height:25px;">0.94</div>
<div class="t" style="left:552px;top:524px;width:85px;height:25px;line-height:25px;"><span class="c">两球</span></div>
<div class="t" style="left:638px;top:524px;width:52px;height:25px;line-height:25px;">0.88</div>
<div class="t" style="left:691px;top:524px;width:61px;height:25px;line-height:25px;">1.17</div>
<div class="t" style="left:753px;top:524px;width:61px;height:25px;line-height:25px;">6.54</div>
<div class="t" style="left:815px;top:524px;width:77px;height:25px;line-height:25px;">10.95</div>
<div class="t" style="left:893px;top:524px;width:38px;height:25px;line-height:25px;"><span style="color:#d01818"><span class="c">胜</span></span></div>
<div class="t" style="left:932px;top:524px;width:38px;height:25px;line-height:25px;"><span style="color:#1414b4"><span class="c">输</span></span></div>
<div class="t" style="left:971px;top:524px;width:58px;height:25px;line-height:25px;"><span style="color:#d01818"><span class="c">大</span></span></div>
<div style="left:84px;top:549px;width:77px;height:25px;background:#fff;"></div>
<div style="left:162px;top:549px;width:113px;height:25px;background:#fff;"></div>
<div style="left:276px;top:549px;width:91px;height:25px;background:#fff;"></div>
<div style="left:368px;top:549px;width:39px;height:25px;background:#fff;"></div>
<div style="left:408px;top:549px;width:94px;height:25px;background:#fff;"></div>
<div style="left:503px;top:549px;width:48px;height:25px;background:#fef9f5;"></div>
<div style="left:552px;top:549px;width:85px;height:25px;background:#fef9f5;"></div>
<div style="left:638px;top:549px;width:52px;height:25px;background:#fef9f5;"></div>
<div style="left:691px;top:549px;width:61px;height:25px;background:#f0f8fb;"></div>
<div style="left:753px;top:549px;width:61px;height:25px;background:#f0f8fb;"></div>
<div style="left:815px;top:549px;width:77px;height:25px;background:#f0f8fb;"></div>
<div style="left:893px;top:549px;width:38px;height:25px;background:#fff;"></div>
<div style="left:932px;top:549px;width:38px;height:25px;background:#fff;"></div>
<div style="left:971px;top:549px;width:58px;height:25px;background:#fff;"></div>
<div class="t" style="left:84px;top:550px;width:77px;height:25px;line-height:25px;">25-07-05</div>
<div class="t" style="left:162px;top:550px;width:113px;height:25px;line-height:25px;"><span class="c">柏林迪纳摩</span></div>
<div class="t" style="left:276px;top:550px;width:91px;height:25px;line-height:25px;"><span style="color:#d01818">0-6</span>(0-1)</div>
<div class="t" style="left:368px;top:550px;width:39px;height:25px;line-height:25px;">2-3</div>
<div class="t" style="left:408px;top:550px;width:94px;height:25px;line-height:25px;"><span style="color:#1f7a1f"><span class="c">柏林赫塔</span></span></div>
<div class="t" style="left:503px;top:550px;width:48px;height:25px;line-height:25px;">1.06</div>
<div class="t" style="left:552px;top:550px;width:85px;height:25px;line-height:25px;"><span class="c">受球半</span></div>
<div class="t" style="left:638px;top:550px;width:52px;height:25px;line-height:25px;">0.70</div>
<div class="t" style="left:691px;top:550px;width:61px;height:25px;line-height:25px;">7.79</div>
<div class="t" style="left:753px;top:550px;width:61px;height:25px;line-height:25px;">5.01</div>
<div class="t" style="left:815px;top:550px;width:77px;height:25px;line-height:25px;">1.30</div>
<div class="t" style="left:893px;top:550px;width:38px;height:25px;line-height:25px;"><span style="color:#d01818"><span class="c">胜</span></span></div>
<div class="t" style="left:932px;top:550px;width:38px;height:25px;line-height:25px;"><span style="color:#d01818"><span class="c">赢</span></span></div>
<div class="t" style="left:971px;top:550px;width:58px;height:25px;line-height:25px;"><span style="color:#d01818"><span class="c">大</span></span></div>
<div style="left:84px;top:575px;width:77px;height:25px;background:#f0f0f0;"></div>
<div style="left:162px;top:575px;width:113px;height:25px;background:#f0f0f0;"></div>
<div style="left:276px;top:575px;width:91px;height:25px;background:#f0f0f0;"></div>
<div style="left:368px;top:575px;width:39px;height:25px;background:#f0f0f0;"></div>
<div style="left:408px;top:575px;width:94px;height:25px;background:#f0f0f0;"></div>
<div style="left:503px;top:575px;width:48px;height:25px;background:#fef9f5;"></div>
<div style="left:552px;top:575px;width:85px;height:25px;background:#fef9f5;"></div>
<div style="left:638px;top:575px;width:52px;height:25px;background:#fef9f5;"></div>
<div style="left:691px;top:575px;width:61px;height:25px;background:#f0f8fb;"></div>
<div style="left:753px;top:575px;width:61px;height:25px;background:#f0f8fb;"></div>
<div style="left:815px;top:575px;width:77px;height:25px;background:#f0f8fb;"></div>
<div style="left:893px;top:575px;width:38px;height:25px;background:#f0f0f0;"></div>
<div style="left:932px;top:575px;width:38px;height:25px;background:#f0f0f0;"></div>
<div style="left:971px;top:575px;width:58px;height:25px;background:#f0f0f0;"></div>
<div class="t" style="left:84px;top:576px;width:77px;height:25px;line-height:25px;">25-06-28</div>
<div class="t" style="left:162px;top:576px;width:113px;height:25px;line-height:25px;"><span style="color:#1f7a1f"><span class="c">柏林赫塔</span></span></div>
<div class="t" style="left:276px;top:576px;width:91px;height:25px;line-height:25px;"><span style="color:#d01818">3-0</span>(0-0)</div>
<div class="t" style="left:368px;top:576px;width:39px;height:25px;line-height:25px;">0-0</div>
<div class="t" style="left:408px;top:576px;width:94px;height:25px;line-height:25px;"><span class="c">卢威斯菲德</span></div>
<div class="t" style="left:503px;top:576px;width:48px;height:25px;line-height:25px;"></div>
<div class="t" style="left:552px;top:576px;width:85px;height:25px;line-height:25px;"></div>
<div class="t" style="left:638px;top:576px;width:52px;height:25px;line-height:25px;"></div>
<div class="t" style="left:691px;top:576px;width:61px;height:25px;line-height:25px;"></div>
<div class="t" style="left:753px;top:576px;width:61px;height:25px;line-height:25px;"></div>
<div class="t" style="left:815px;top:576px;width:77px;height:25px;line-height:25px;"></div>
<div class="t" style="left:893px;top:576px;width:38px;height:25px;line-height:25px;"><span style="color:#d01818"><span class="c">胜</span></span></div>
<div class="t" style="left:932px;top:576px;width:38px;height:25px;line-height:25px;"></div>
<div class="t" style="left:971px;top:576px;width:58px;height:25px;line-height:25px;"></div>
<div style="left:84px;top:601px;width:77px;height:25px;background:#fff;"></div>
<div style="left:162px;top:601px;width:113px;height:25px;background:#fff;"></div>
<div style="left:276px;top:601px;width:91px;height:25px;background:#fff;"></div>
<div style="left:368px;top:601px;width:39px;height:25px;background:#fff;"></div>
<div style="left:408px;top:601px;width:94px;height:25px;background:#fff;"></div>
<div style="left:503px;top:601px;width:48px;height:25px;background:#fef9f5;"></div>
<div style="left:552px;top:601px;width:85px;height:25px;background:#fef9f5;"></div>
<div style="left:638px;top:601px;width:52px;height:25px;background:#fef9f5;"></div>
<div style="left:691px;top:601px;width:61px;height:25px;background:#f0f8fb;"></div>
<div style="left:753px;top:601px;width:61px;height:25px;background:#f0f8fb;"></div>
<div style="left:815px;top:601px;width:77px;height:25px;background:#f0f8fb;"></div>
<div style="left:893px;top:601px;width:38px;height:25px;background:#fff;"></div>
<div style="left:932px;top:601px;width:38px;height:25px;background:#fff;"></div>
<div style="left:971px;top:601px;width:58px;height:25px;background:#fff;"></div>
<div class="t" style="left:84px;top:602px;width:77px;height:25px;line-height:25px;">25-05-18</div>
<div class="t" style="left:162px;top:602px;width:113px;height:25px;line-height:25px;"><span style="color:#1f7a1f"><span class="c">柏林赫塔</span></span></div>
<div class="t" style="left:276px;top:602px;width:91px;height:25px;line-height:25px;"><span style="color:#d01818">1-1</span>(1-1)</div>
<div class="t" style="left:368px;top:602px;width:39px;height:25px;line-height:25px;">12-3</div>
<div class="t" style="left:408px;top:602px;width:94px;height:25px;line-height:25px;"><span class="c">汉诺威</span>96</div>
<div class="t" style="left:503px;top:602px;width:48px;height:25px;line-height:25px;">0.87</div>
<div class="t" style="left:552px;top:602px;width:85px;height:25px;line-height:25px;"><span class="c">平</span>/<span class="c">半</span></div>
<div class="t" style="left:638px;top:602px;width:52px;height:25px;line-height:25px;">1.02</div>
<div class="t" style="left:691px;top:602px;width:61px;height:25px;line-height:25px;">2.01</div>
<div class="t" style="left:753px;top:602px;width:61px;height:25px;line-height:25px;">3.90</div>
<div class="t" style="left:815px;top:602px;width:77px;height:25px;line-height:25px;">3.15</div>
<div class="t" style="left:893px;top:602px;width:38px;height:25px;line-height:25px;"><span style="color:#1f7a1f"><span class="c">平</span></span></div>
<div class="t" style="left:932px;top:602px;width:38px;height:25px;line-height:25px;"><span style="color:#1414b4"><span class="c">输</span></span></div>
<div class="t" style="left:971px;top:602px;width:58px;height:25px;line-height:25px;"><span style="color:#1414b4"><span class="c">小</span></span></div>
<div style="left:84px;top:627px;width:77px;height:25px;background:#f0f0f0;"></div>
<div style="left:162px;top:627px;width:113px;height:25px;background:#f0f0f0;"></div>
<div style="left:276px;top:627px;width:91px;height:25px;background:#f0f0f0;"></div>
<div style="left:368px;top:627px;width:39px;height:25px;background:#f0f0f0;"></div>
<div style="left:408px;top:627px;width:94px;height:25px;background:#f0f0f0;"></div>
<div style="left:503px;top:627px;width:48px;height:25px;background:#fef9f5;"></div>
<div style="left:552px;top:627px;width:85px;height:25px;background:#fef9f5;"></div>
<div style="left:638px;top:627px;width:52px;height:25px;background:#fef9f5;"></div>
<div style="left:691px;top:627px;width:61px;height:25px;background:#f0f8fb;"></div>
<div style="left:753px;top:627px;width:61px;height:25px;background:#f0f8fb;"></div>
<div style="left:815px;top:627px;width:77px;height:25px;background:#f0f8fb;"></div>
<div style="left:893px;top:627px;width:38px;height:25px;background:#f0f0f0;"></div>
<div style="left:932px;top:627px;width:38px;height:25px;background:#f0f0f0;"></div>
<div style="left:971px;top:627px;width:58px;height:25px;background:#f0f0f0;"></div>
<div class="t" style="left:84px;top:628px;width:77px;height:25px;line-height:25px;">25-05-10</div>
<div class="t" style="left:162px;top:628px;width:113px;height:25px;line-height:25px;"><span class="c">普鲁士明斯特</span></div>
<div class="t" style="left:276px;top:628px;width:91px;height:25px;line-height:25px;"><span style="color:#d01818">2-0</span>(1-0)</div>
<div class="t" style="left:368px;top:628px;width:39px;height:25px;line-height:25px;">2-7</div>
<div class="t" style="left:408px;top:628px;width:94px;height:25px;line-height:25px;"><span style="color:#1f7a1f"><span class="c">柏林赫塔</span></span><span class="badge">1</span></div>
<div class="t" style="left:503px;top:628px;width:48px;height:25px;line-height:25px;">1.08</div>
<div class="t" style="left:552px;top:628px;width:85px;height:25px;line-height:25px;"><span class="c">平手</span></div>
<div class="t" style="left:638px;top:628px;width:52px;height:25px;line-height:25px;">0.81</div>
<div class="t" style="left:691px;top:628px;width:61px;height:25px;line-height:25px;">2.51</div>
<div class="t" style="left:753px;top:628px;width:61px;height:25px;line-height:25px;">3.66</div>
<div class="t" style="left:815px;top:628px;width:77px;height:25px;line-height:25px;">2.50</div>
<div class="t" style="left:893px;top:628px;width:38px;height:25px;line-height:25px;"><span style="color:#1414b4"><span class="c">负</span></span></div>
<div class="t" style="left:932px;top:628px;width:38px;height:25px;line-height:25px;"><span style="color:#1414b4"><span class="c">输</span></span></div>
<div class="t" style="left:971px;top:628px;width:58px;height:25px;line-height:25px;"><span style="color:#1414b4"><span class="c">小</span></span></div>
<div style="left:84px;top:653px;width:77px;height:25px;background:#fff;"></div>
<div style="left:162px;top:653px;width:113px;height:25px;background:#fff;"></div>
<div style="left:276px;top:653px;width:91px;height:25px;background:#fff;"></div>
<div style="left:368px;top:653px;width:39px;height:25px;background:#fff;"></div>
<div style="left:408px;top:653px;width:94px;height:25px;background:#fff;"></div>
<div style="left:503px;top:653px;width:48px;height:25px;background:#fef9f5;"></div>
<div style="left:552px;top:653px;width:85px;height:25px;background:#fef9f5;"></div>
<div style="left:638px;top:653px;width:52px;height:25px;background:#fef9f5;"></div>
<div style="left:691px;top:653px;width:61px;height:25px;background:#f0f8fb;"></div>
<div style="left:753px;top:653px;width:61px;height:25px;background:#f0f8fb;"></div>
<div style="left:815px;top:653px;width:77px;height:25px;background:#f0f8fb;"></div>
<div style="left:893px;top:653px;width:38px;height:25px;background:#fff;"></div>
<div style="left:932px;top:653px;width:38px;height:25px;background:#fff;"></div>
<div style="left:971px;top:653px;width:58px;height:25px;background:#fff;"></div>
<div class="t" style="left:84px;top:654px;width:77px;height:25px;line-height:25px;">25-05-04</div>
<div class="t" style="left:162px;top:654px;width:113px;height:25px;line-height:25px;"><span style="color:#1f7a1f"><span class="c">柏林赫塔</span></span></div>
<div class="t" style="left:276px;top:654px;width:91px;height:25px;line-height:25px;"><span style="color:#d01818">1-0</span>(1-0)</div>
<div class="t" style="left:368px;top:654px;width:39px;height:25px;line-height:25px;">8-3</div>
<div class="t" style="left:408px;top:654px;width:94px;height:25px;line-height:25px;"><span class="c">菲尔特</span></div>
<div class="t" style="left:503px;top:654px;width:48px;height:25px;line-height:25px;">0.95</div>
<div class="t" style="left:552px;top:654px;width:85px;height:25px;line-height:25px;"><span class="c">半球</span></div>
<div class="t" style="left:638px;top:654px;width:52px;height:25px;line-height:25px;">0.94</div>
<div class="t" style="left:691px;top:654px;width:61px;height:25px;line-height:25px;">1.87</div>
<div class="t" style="left:753px;top:654px;width:61px;height:25px;line-height:25px;">3.88</div>
<div class="t" style="left:815px;top:654px;width:77px;height:25px;line-height:25px;">3.59</div>
<div class="t" style="left:893px;top:654px;width:38px;height:25px;line-height:25px;"><span style="color:#d01818"><span class="c">胜</span></span></div>
<div class="t" style="left:932px;top:654px;width:38px;height:25px;line-height:25px;"><span style="color:#d01818"><span class="c">赢</span></span></div>
<div class="t" style="left:971px;top:654px;width:58px;height:25px;line-height:25px;"><span style="color:#1414b4"><span class="c">小</span></span></div>
<div style="left:84px;top:679px;width:77px;height:25px;background:#f0f0f0;"></div>
<div style="left:162px;top:679px;width:113px;height:25px;background:#f0f0f0;"></div>
<div style="left:276px;top:679px;width:91px;height:25px;background:#f0f0f0;"></div>
<div style="left:368px;top:679px;width:39px;height:25px;background:#f0f0f0;"></div>
<div style="left:408px;top:679px;width:94px;height:25px;background:#f0f0f0;"></div>
<div style="left:503px;top:679px;width:48px;height:25px;background:#fef9f5;"></div>
<div style="left:552px;top:679px;width:85px;height:25px;background:#fef9f5;"></div>
<div style="left:638px;top:679px;width:52px;height:25px;background:#fef9f5;"></div>
<div style="left:691px;top:679px;width:61px;height:25px;background:#f0f8fb;"></div>
<div style="left:753px;top:679px;width:61px;height:25px;background:#f0f8fb;"></div>
<div style="left:815px;top:679px;width:77px;height:25px;background:#f0f8fb;"></div>
<div style="left:893px;top:679px;width:38px;height:25px;background:#f0f0f0;"></div>
<div style="left:932px;top:679px;width:38px;height:25px;background:#f0f0f0;"></div>
<div style="left:971px;top:679px;width:58px;height:25px;background:#f0f0f0;"></div>
<div class="t" style="left:84px;top:680px;width:77px;height:25px;line-height:25px;">25-04-26</div>
<div class="t" style="left:162px;top:680px;width:113px;height:25px;line-height:25px;"><span style="color:#1f7a1f"><span class="c">柏林赫塔</span></span></div>
<div class="t" style="left:276px;top:680px;width:91px;height:25px;line-height:25px;"><span style="color:#d01818">1-1</span>(1-1)</div>
<div class="t" style="left:368px;top:680px;width:39px;height:25px;line-height:25px;">4-4</div>
<div class="t" style="left:408px;top:680px;width:94px;height:25px;line-height:25px;"><span class="c">马格德堡</span></div>
<div class="t" style="left:503px;top:680px;width:48px;height:25px;line-height:25px;">1.06</div>
<div class="t" style="left:552px;top:680px;width:85px;height:25px;line-height:25px;"><span class="c">平</span>/<span class="c">半</span></div>
<div class="t" style="left:638px;top:680px;width:52px;height:25px;line-height:25px;">0.83</div>
<div class="t" style="left:691px;top:680px;width:61px;height:25px;line-height:25px;">2.26</div>
<div class="t" style="left:753px;top:680px;width:61px;height:25px;line-height:25px;">3.77</div>
<div class="t" style="left:815px;top:680px;width:77px;height:25px;line-height:25px;">2.75</div>
<div class="t" style="left:893px;top:680px;width:38px;height:25px;line-height:25px;"><span style="color:#1f7a1f"><span class="c">平</span></span></div>
<div class="t" style="left:932px;top:680px;width:38px;height:25px;line-height:25px;"><span style="color:#1414b4"><span class="c">输</span></span></div>
<div class="t" style="left:971px;top:680px;width:58px;height:25px;line-height:25px;"><span style="color:#1414b4"><span class="c">小</span></span></div>
<div style="left:2px;top:405px;width:1px;height:300px;background:#bdbdbd;"></div>
<div style="left:83px;top:405px;width:1px;height:300px;background:#bdbdbd;"></div>
<div style="left:161px;top:405px;width:1px;height:300px;background:#bdbdbd;"></div>
<div style="left:275px;top:405px;width:1px;height:300px;background:#bdbdbd;"></div>
<div style="left:367px;top:405px;width:1px;height:300px;background:#bdbdbd;"></div>
<div style="left:407px;top:405px;width:1px;height:300px;background:#bdbdbd;"></div>
<div style="left:502px;top:405px;width:1px;height:300px;background:#bdbdbd;"></div>
<div style="left:551px;top:425px;width:1px;height:280px;background:#bdbdbd;"></div>
<div style="left:637px;top:425px;width:1px;height:280px;background:#bdbdbd;"></div>
<div style="left:690px;top:405px;width:1px;height:300px;background:#bdbdbd;"></div>
<div style="left:752px;top:425px;width:1px;height:280px;background:#bdbdbd;"></div>
<div style="left:814px;top:425px;width:1px;height:280px;background:#bdbdbd;"></div>
<div style="left:892px;top:405px;width:1px;height:300px;background:#bdbdbd;"></div>
<div style="left:931px;top:425px;width:1px;height:280px;background:#bdbdbd;"></div>
<div style="left:970px;top:425px;width:1px;height:280px;background:#bdbdbd;"></div>
<div style="left:1029px;top:405px;width:1px;height:300px;background:#bdbdbd;"></div>
<div style="left:83px;top:470px;width:947px;height:1px;background:#bdbdbd;"></div>
<div style="left:83px;top:496px;width:947px;height:1px;background:#bdbdbd;"></div>
<div style="left:83px;top:522px;width:947px;height:1px;background:#bdbdbd;"></div>
<div style="left:83px;top:548px;width:947px;height:1px;background:#bdbdbd;"></div>
<div style="left:83px;top:574px;width:947px;height:1px;background:#bdbdbd;"></div>
<div style="left:83px;top:600px;width:947px;height:1px;background:#bdbdbd;"></div>
<div style="left:83px;top:626px;width:947px;height:1px;background:#bdbdbd;"></div>
<div style="left:83px;top:652px;width:947px;height:1px;background:#bdbdbd;"></div>
<div style="left:83px;top:678px;width:947px;height:1px;background:#bdbdbd;"></div>
<div style="left:83px;top:704px;width:947px;height:1px;background:#bdbdbd;"></div>
<div style="left:2px;top:445px;width:81px;height:25px;background:#01a8a8;"></div>
<div style="left:83px;top:445px;width:1px;height:25px;background:#c5ebeb;"></div>
<div class="t tw" style="left:2px;top:446px;width:81px;height:25px;line-height:25px;color:#fff"><span class="c">球会友谊</span></div>
<div style="left:2px;top:471px;width:81px;height:25px;background:#01a8a8;"></div>
<div style="left:2px;top:470px;width:81px;height:1px;background:#73cfcf;"></div>
<div style="left:83px;top:471px;width:1px;height:25px;background:#c5ebeb;"></div>
<div class="t tw" style="left:2px;top:472px;width:81px;height:25px;line-height:25px;color:#fff"><span class="c">球会友谊</span></div>
<div style="left:2px;top:497px;width:81px;height:25px;background:#01a8a8;"></div>
<div style="left:2px;top:496px;width:81px;height:1px;background:#73cfcf;"></div>
<div style="left:83px;top:497px;width:1px;height:25px;background:#c5ebeb;"></div>
<div class="t tw" style="left:2px;top:498px;width:81px;height:25px;line-height:25px;color:#fff"><span class="c">球会友谊</span></div>
<div style="left:2px;top:523px;width:81px;height:25px;background:#01a8a8;"></div>
<div style="left:2px;top:522px;width:81px;height:1px;background:#73cfcf;"></div>
<div style="left:83px;top:523px;width:1px;height:25px;background:#c5ebeb;"></div>
<div class="t tw" style="left:2px;top:524px;width:81px;height:25px;line-height:25px;color:#fff"><span class="c">球会友谊</span></div>
<div style="left:2px;top:549px;width:81px;height:25px;background:#01a8a8;"></div>
<div style="left:2px;top:548px;width:81px;height:1px;background:#73cfcf;"></div>
<div style="left:83px;top:549px;width:1px;height:25px;background:#c5ebeb;"></div>
<div class="t tw" style="left:2px;top:550px;width:81px;height:25px;line-height:25px;color:#fff"><span class="c">球会友谊</span></div>
<div style="left:2px;top:575px;width:81px;height:25px;background:#01a8a8;"></div>
<div style="left:2px;top:574px;width:81px;height:1px;background:#73cfcf;"></div>
<div style="left:83px;top:575px;width:1px;height:25px;background:#c5ebeb;"></div>
<div class="t tw" style="left:2px;top:576px;width:81px;height:25px;line-height:25px;color:#fff"><span class="c">球会友谊</span></div>
<div style="left:2px;top:601px;width:81px;height:25px;background:#cc00cc;"></div>
<div style="left:2px;top:600px;width:81px;height:1px;background:#aba0d9;"></div>
<div style="left:83px;top:601px;width:1px;height:25px;background:#f3c5f3;"></div>
<div class="t tw" style="left:2px;top:602px;width:81px;height:25px;line-height:25px;color:#fff"><span class="c">德乙</span></div>
<div style="left:2px;top:627px;width:81px;height:25px;background:#cc00cc;"></div>
<div style="left:2px;top:626px;width:81px;height:1px;background:#e272e2;"></div>
<div style="left:83px;top:627px;width:1px;height:25px;background:#f3c5f3;"></div>
<div class="t tw" style="left:2px;top:628px;width:81px;height:25px;line-height:25px;color:#fff"><span class="c">德乙</span></div>
<div style="left:2px;top:653px;width:81px;height:25px;background:#cc00cc;"></div>
<div style="left:2px;top:652px;width:81px;height:1px;background:#e272e2;"></div>
<div style="left:83px;top:653px;width:1px;height:25px;background:#f3c5f3;"></div>
<div class="t tw" style="left:2px;top:654px;width:81px;height:25px;line-height:25px;color:#fff"><span class="c">德乙</span></div>
<div style="left:2px;top:679px;width:81px;height:25px;background:#cc00cc;"></div>
<div style="left:2px;top:678px;width:81px;height:1px;background:#e272e2;"></div>
<div style="left:83px;top:679px;width:1px;height:25px;background:#f3c5f3;"></div>
<div class="t tw" style="left:2px;top:680px;width:81px;height:25px;line-height:25px;color:#fff"><span class="c">德乙</span></div>
<div style="left:2px;top:704px;width:81px;height:1px;background:#f2bff2;"></div>
<div style="left:2px;top:705px;width:1028px;height:25px;background:#fff;"></div>
<div style="left:2px;top:705px;width:1px;height:26px;background:#bdbdbd;"></div>
<div style="left:1029px;top:705px;width:1px;height:26px;background:#bdbdbd;"></div>
<div style="left:2px;top:730px;width:1028px;height:1px;background:#bdbdbd;"></div>
<div class="t" style="left:2px;top:706px;width:1028px;height:25px;line-height:25px;letter-spacing:0.2px"><span class="c">近</span><span style="color:#d01818">10</span><span class="c">场</span>,<span class="c">胜</span>5<span class="c">平</span>3<span class="c">负</span>2, <span class="c">胜率</span>:<span style="color:#d01818">50%</span> <span class="c">让胜率</span>:<span style="color:#d01818">33.3%</span> <span class="c">大率</span>:<span style="color:#d01818">33.3%</span> <span class="c">单率</span>:<span style="color:#d01818">50%</span></div>
<div class="t" style="left:417px;top:386px;width:14px;height:17px;line-height:17px;text-align:left"><span class="c">近</span></div>
<div class="sel" style="left:433px;top:386px;width:36px;height:15px;"><span style="position:absolute;left:6px;top:0;line-height:15px"><span style="font-family:Liberation Serif,serif;font-size:13.5px;letter-spacing:1.5px;-webkit-text-stroke:0.3px #000;display:inline-block;transform:scaleX(0.82);transform-origin:0 50%">10</span></span></div>
<svg style="position:absolute;left:456px;top:391px" width="11" height="7" viewBox="0 0 11 7"><path d="M1 1.2 L5.5 5.5 L10 1.2" fill="none" stroke="#000" stroke-width="2.1"/></svg>
<div class="t" style="left:476px;top:386px;width:14px;height:17px;line-height:17px;text-align:left"><span class="c">场</span></div>
<div style="left:491px;top:386px;width:11px;height:11px;background:#fff;border:1px solid #767676;border-radius:2px"></div>
<div class="t" style="left:508px;top:386px;width:30px;height:17px;line-height:17px;text-align:left"><span class="c">同客</span></div>
<div style="left:535px;top:386px;width:13px;height:13px;background:#0a6cf5;border-radius:2px"><svg style="position:absolute;left:0;top:0" width="13" height="13" viewBox="0 0 13 13"><path d="M2.3 6.8 L5.3 9.4 L10.5 3.2" fill="none" stroke="#fff" stroke-width="2"/></svg></div>
<div class="t" style="left:548px;top:386px;width:50px;height:17px;line-height:17px;text-align:left"><span class="c">球会友谊</span></div>
<div style="left:596px;top:386px;width:13px;height:13px;background:#0a6cf5;border-radius:2px"><svg style="position:absolute;left:0;top:0" width="13" height="13" viewBox="0 0 13 13"><path d="M2.3 6.8 L5.3 9.4 L10.5 3.2" fill="none" stroke="#fff" stroke-width="2"/></svg></div>
<div class="t" style="left:610px;top:386px;width:30px;height:17px;line-height:17px;text-align:left"><span class="c">德乙</span></div>
<div style="left:633px;top:386px;width:13px;height:13px;background:#0a6cf5;border-radius:2px"><svg style="position:absolute;left:0;top:0" width="13" height="13" viewBox="0 0 13 13"><path d="M2.3 6.8 L5.3 9.4 L10.5 3.2" fill="none" stroke="#fff" stroke-width="2"/></svg></div>
<div class="t" style="left:647px;top:386px;width:40px;height:17px;line-height:17px;text-align:left"><span class="c">德国杯</span></div>
<div class="sel" style="left:537px;top:406px;width:58px;height:17px;"><span style="position:absolute;left:4px;top:0;line-height:17px">Crow*</span></div>
<svg style="position:absolute;left:582px;top:412px" width="11" height="7" viewBox="0 0 11 7"><path d="M1 1.2 L5.5 5.5 L10 1.2" fill="none" stroke="#000" stroke-width="2.1"/></svg>
<div class="sel" style="left:605px;top:406px;width:49px;height:17px;"><span style="position:absolute;left:3px;top:0;line-height:17px"><span class="c">终指</span></span></div>
<svg style="position:absolute;left:641px;top:412px" width="11" height="7" viewBox="0 0 11 7"><path d="M1 1.2 L5.5 5.5 L10 1.2" fill="none" stroke="#000" stroke-width="2.1"/></svg>
<div class="sel" style="left:728px;top:406px;width:67px;height:17px;"><span style="position:absolute;left:3px;top:0;line-height:17px"><span class="c">平均值</span></span></div>
<svg style="position:absolute;left:782px;top:412px" width="11" height="7" viewBox="0 0 11 7"><path d="M1 1.2 L5.5 5.5 L10 1.2" fill="none" stroke="#000" stroke-width="2.1"/></svg>
<div class="sel" style="left:805px;top:406px;width:48px;height:17px;"><span style="position:absolute;left:3px;top:0;line-height:17px"><span class="c">终指</span></span></div>
<svg style="position:absolute;left:840px;top:412px" width="11" height="7" viewBox="0 0 11 7"><path d="M1 1.2 L5.5 5.5 L10 1.2" fill="none" stroke="#000" stroke-width="2.1"/></svg>
<div class="sel" style="left:935px;top:406px;width:49px;height:17px;"><span style="position:absolute;left:3px;top:0;line-height:17px"><span class="c">全场</span></span></div>
<svg style="position:absolute;left:971px;top:412px" width="11" height="7" viewBox="0 0 11 7"><path d="M1 1.2 L5.5 5.5 L10 1.2" fill="none" stroke="#000" stroke-width="2.1"/></svg>
<div style="left:2px;top:735px;width:1028px;height:2px;background:#4b3b8f;"></div>
</body></html>
